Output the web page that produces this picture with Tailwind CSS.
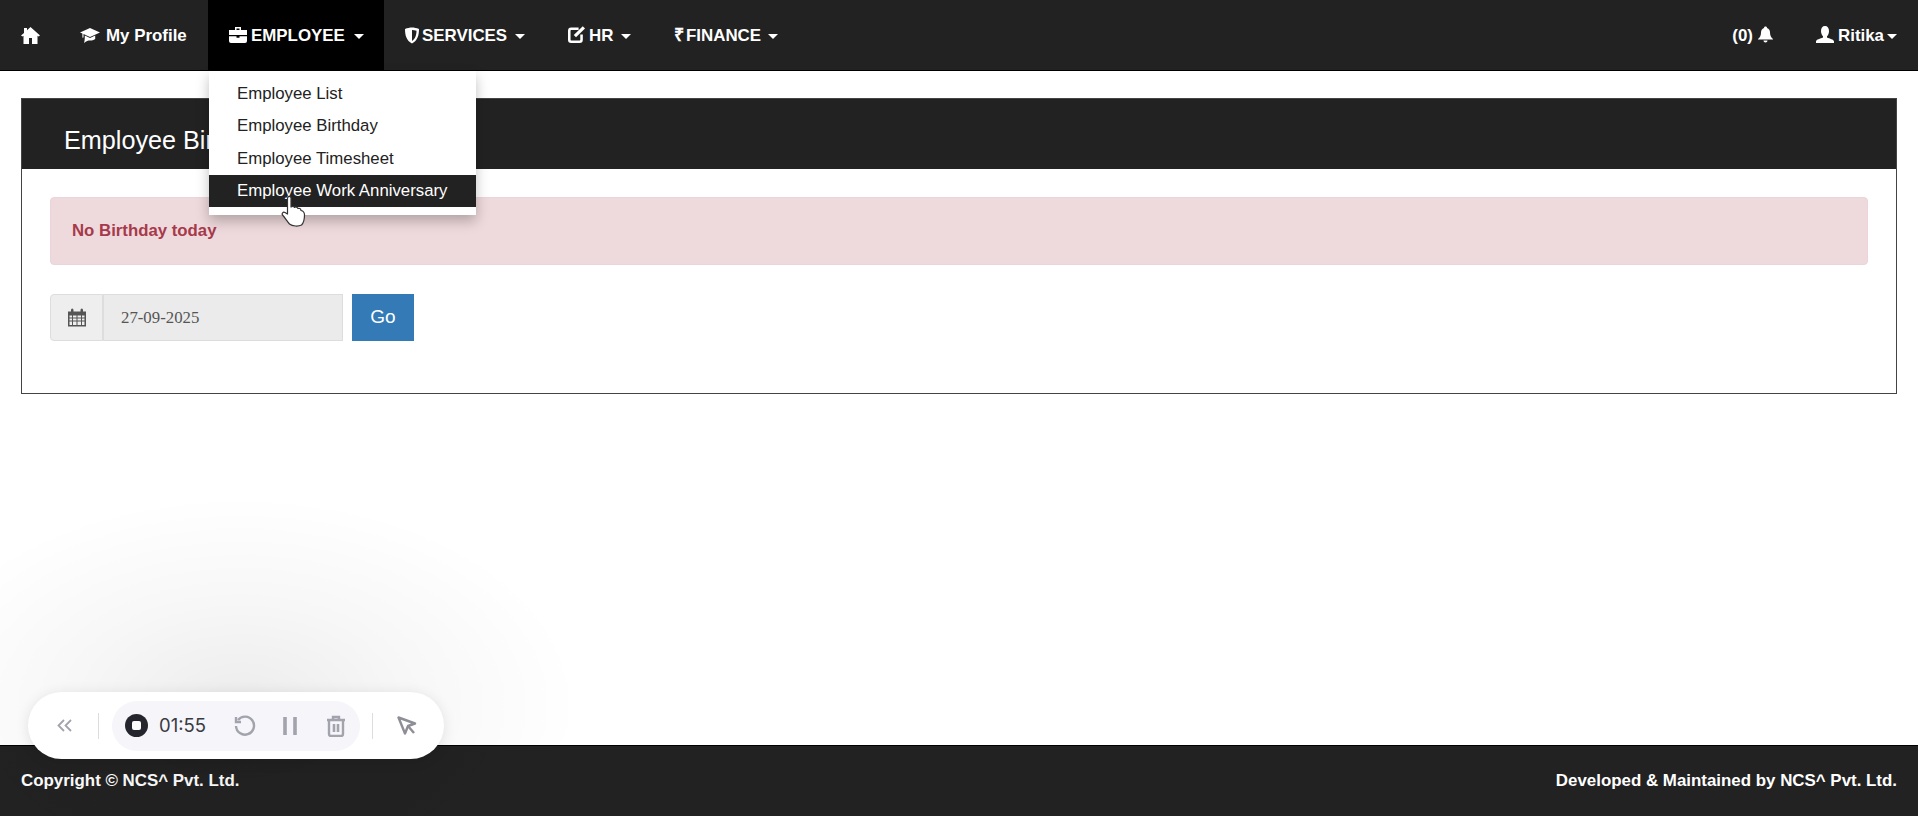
<!DOCTYPE html>
<html lang="en">
  <head>
    <meta charset="UTF-8" />
    <meta name="viewport" content="width=device-width, initial-scale=1.0" />
    <title>Employee Birthday</title>
    <script src="https://cdn.jsdelivr.net/npm/@tailwindcss/browser@4"></script>
  </head>
  <body class="bg-white font-['Liberation_Sans',Arial,sans-serif] overflow-hidden">
    <div class="relative flex flex-col h-screen w-[1918px]">
      <!-- top nav -->
      <nav class="flex items-stretch justify-between h-[71px] bg-[#222] text-white text-[16.900px] font-bold border-b border-black shrink-0">
        <div class="flex items-stretch">
          <a class="flex items-center w-[59px] pl-[21px]">
            <svg class="w-[19px] h-[17px]" viewBox="0 0 19 17" fill="currentColor"><path d="M9.500 0 19 8.600 17.600 9.600 16.500 8.700V17H11V11H8V17H2.500V8.700L1.400 9.600 0 8.600 3 5.900V1H6V3.200Z"/></svg>
          </a>
          <a class="flex items-center w-[149px] pl-[21px] gap-[6px] pt-[2px]">
            <svg class="w-[20px] h-[15px] -mt-[2px]" viewBox="0 0 20 15" fill="currentColor"><path d="M10 0 20 4.400 10 9 3.500 6V9.400L2.400 9.800V5.500L0 4.400ZM4.800 7.400 10 10 15.200 7.400V11C13.500 12.200 12 12.600 10 12.600 8 12.600 6.500 13 4 15 4.600 13 4.800 11 4.800 7.400Z"/></svg>
            <span>My Profile</span>
          </a>
          <a class="flex items-center w-[176px] pl-[21px] gap-[4px] bg-black pt-[2px]">
            <svg class="w-[18px] h-[16px] -mt-[3px]" viewBox="0 0 18 16" fill="currentColor"><path d="M6 0H12V3H18V8H0V3H6ZM7.500 1.400V3H10.500V1.400ZM0 9.200H7.500V10.700H10.500V9.200H18V14Q18 16 16 16H2Q0 16 0 14Z"/></svg>
            <span>EMPLOYEE</span>
            <span class="ml-[5px] w-0 h-0 border-x-[5px] border-x-transparent border-t-[5px] border-t-white"></span>
          </a>
          <a class="flex items-center w-[163px] pl-[21px] gap-[3px] pt-[2px]">
            <svg class="w-[14px] h-[17px] -mt-[2px]" viewBox="0 0 14 16" fill="currentColor"><path d="M0 1.500C2.500.5 4.700 0 7 0S11.500.5 14 1.500C14 8 12.500 13 7 16 1.500 13 0 8 0 1.500ZM7 2.500V13.400C10.500 11 11.500 7 11.500 3.200 10 2.800 8.500 2.500 7 2.500Z"/></svg>
            <span>SERVICES</span>
            <span class="ml-[5px] w-0 h-0 border-x-[5px] border-x-transparent border-t-[5px] border-t-white"></span>
          </a>
          <a class="flex items-center w-[107px] pl-[21px] gap-[3px] pt-[2px]">
            <svg class="w-[18px] h-[17px] -mt-[3px]" viewBox="0 0 17 16" fill="none" stroke="currentColor"><path stroke-width="2.400" d="M10 2.500H3Q1.200 2.500 1.200 4.500V13Q1.200 14.800 3 14.800H11Q12.800 14.800 12.800 13V8"/><path stroke-width="3" d="M6.500 9.500 15 1.200"/></svg>
            <span>HR</span>
            <span class="ml-[5px] w-0 h-0 border-x-[5px] border-x-transparent border-t-[5px] border-t-white"></span>
          </a>
          <a class="flex items-center pl-[20px] gap-[2px] pt-[2px]">
            <span class="text-[18px] -mt-[2px]">₹</span>
            <span>FINANCE</span>
            <span class="ml-[5px] w-0 h-0 border-x-[5px] border-x-transparent border-t-[5px] border-t-white"></span>
          </a>
        </div>
        <div class="flex items-center pr-[21px] pt-[2px]">
          <span>(0)</span>
          <svg class="ml-[5px] -mt-[3px] w-[15px] h-[17px]" viewBox="0 0 15 16" fill="currentColor"><path d="M7.500 0C8.500 0 9 .6 9 1.400 11 2 12 3.700 12 6 12 9 13 11 15 12.500V13H0V12.500C2 11 3 9 3 6 3 3.700 4 2 6 1.400 6 .6 6.500 0 7.500 0ZM5.500 14H9.500C9.500 15.200 8.700 16 7.500 16S5.500 15.200 5.500 14Z"/></svg>
          <svg class="ml-[43px] -mt-[3px] w-[18px] h-[17px]" viewBox="0 0 18 17" fill="currentColor"><path d="M9 0C11.700 0 13 2 13 5 13 7.500 12 9.500 11 10.300V11.500C13.500 12.500 18 13.500 18 15.500V17H0V15.500C0 13.500 4.500 12.500 7 11.500V10.300C6 9.500 5 7.500 5 5 5 2 6.300 0 9 0Z"/></svg>
          <span class="ml-[4px]">Ritika</span>
          <span class="ml-[3px] w-0 h-0 border-x-[5px] border-x-transparent border-t-[5px] border-t-white"></span>
        </div>
      </nav>

      <!-- content -->
      <main class="flex-1 px-[21px] pt-[27px]">
        <section class="border border-[#444] w-[1876px]">
          <h1 class="flex items-center h-[70px] pl-[42px] pt-[14px] bg-[#222] text-white text-[25.200px] font-normal">Employee Birthday</h1>
          <div class="px-[28px] pt-[28px] pb-[52px]">
            <div class="flex items-center h-[68px] pl-[21px] rounded bg-[#eed9dc] border border-[#ebd5da] text-[#a63a4b] text-[16.800px] font-bold">No Birthday today</div>
            <div class="flex items-stretch h-[47px] mt-[29px]">
              <span class="flex items-center justify-center w-[53px] bg-[#eee] border border-[#ddd] rounded-l">
                <svg class="w-[18px] h-[19px]" viewBox="0 0 18 18" fill="#555"><path d="M0 3H3V1.500Q3 0 4.200 0T5.500 1.500V3H12.500V1.500Q12.500 0 13.800 0T15 1.500V3H18V18H0ZM1.500 7V9H4V7ZM5 7V9H8.500V7ZM9.500 7V9H13V7ZM14 7V9H16.500V7ZM1.500 10V12H4V10ZM5 10V12H8.500V10ZM9.500 10V12H13V10ZM14 10V12H16.500V10ZM1.500 13V16.500H4V13ZM5 13V16.500H8.500V13ZM9.500 13V16.500H13V13ZM14 13V16.500H16.500V13Z"/></svg>
              </span>
              <input value="27-09-2025" readonly class="w-[240px] pl-[17px] bg-[#ebebeb] border border-[#ddd] text-[#555] text-[16.800px] font-['Liberation_Serif',serif]" />
              <button class="w-[62px] ml-[9px] bg-[#337ab7] text-white text-[19px]">Go</button>
            </div>
          </div>
        </section>
      </main>

      <footer class="flex items-center justify-between h-[71px] px-[21px] bg-[#222] text-white text-[16.900px] font-bold border-t border-black shrink-0">
        <span>Copyright © NCS^ Pvt. Ltd.</span>
        <span>Developed &amp; Maintained by NCS^ Pvt. Ltd.</span>
      </footer>

      <!-- employee dropdown -->
      <ul class="absolute left-[209px] top-[71px] w-[267px] h-[144px] pt-[6px] bg-white shadow-[0_6px_12px_rgba(0,0,0,0.25)] text-[16.800px] text-[#222]">
        <li class="flex items-center h-[32.500px] pl-[28px]">Employee List</li>
        <li class="flex items-center h-[32.500px] pl-[28px]">Employee Birthday</li>
        <li class="flex items-center h-[32.500px] pl-[28px]">Employee Timesheet</li>
        <li class="flex items-center h-[32.500px] pl-[28px] bg-[#222] text-white">Employee Work Anniversary</li>
      </ul>

      <!-- mouse pointer -->
      <svg class="absolute left-[281px] top-[195px] w-[25px] h-[32px]" viewBox="0 0 24 32" fill="#fff" stroke="#333" stroke-width="1.200" stroke-linejoin="round">
        <path d="M6.500 2C7.800 1 9.500 1.500 9.500 3V12C10.500 11 12.500 11 13 12.500 14 11.500 16 12 16.300 13.500 17.500 13 19.500 13.500 19.500 15.500 22 16 23 18 23 20 23 25 22 28 20 30 17 31.500 11 31.500 8 29 5.500 26 3 22 1 20 0 18.500 1.500 16.500 3.500 17.500L6 19V3Z"/>
      </svg>

      <!-- screen recorder widget -->
      <div class="absolute left-0 top-[500px] w-[620px] h-[316px] pointer-events-none bg-[radial-gradient(ellipse_340px_210px_at_240px_205px,rgba(0,0,0,0.075),rgba(0,0,0,0.03)_50%,transparent_100%)]"></div>
      <div class="absolute left-[28px] top-[692px] flex items-center w-[416px] h-[67px] rounded-full bg-white shadow-[0_2px_14px_rgba(0,0,0,0.10)] font-['Inter',sans-serif]">
        <svg class="ml-[29px] w-[15px] h-[13px]" viewBox="0 0 15 13" fill="none" stroke="#a3a3ad" stroke-width="1.800"><path d="M7 1 1.500 6.500 7 12M14 1 8.500 6.500 14 12"/></svg>
        <span class="ml-[26px] w-px h-[26px] bg-[#ddd]"></span>
        <div class="flex items-center ml-[13px] w-[248px] h-[50px] rounded-full bg-[#f5f5fa]">
          <span class="flex items-center justify-center ml-[13px] w-[23px] h-[23px] rounded-full bg-[#25252d]"><span class="w-[9px] h-[9px] rounded-[2px] bg-white"></span></span>
          <span class="ml-[11px] text-[18.500px] text-[#3a3a42]">01:55</span>
          <svg class="ml-[28px] w-[22px] h-[22px]" viewBox="0 0 22 22" fill="none" stroke="#a3a3ad" stroke-width="2.400"><path d="M4 5A9 9 0 1 1 2 11"/><path d="M2 2V7H7"/></svg>
          <svg class="ml-[27px] w-[14px] h-[20px]" viewBox="0 0 14 20" fill="none" stroke="#a3a3ad" stroke-width="3.600"><path d="M2 1V19M12 1V19"/></svg>
          <svg class="ml-[29px] w-[20px] h-[22px]" viewBox="0 0 20 22" fill="none" stroke="#a3a3ad" stroke-width="2.400"><path d="M1 5H19M7 5V2H13V5M3 5V19Q3 21 5 21H15Q17 21 17 19V5"/><path stroke-width="2.600" d="M8 9V17M12 9V17"/></svg>
        </div>
        <span class="ml-[12px] w-px h-[26px] bg-[#ddd]"></span>
        <svg class="ml-[24px] w-[20px] h-[20px]" viewBox="0 0 20 20" fill="none" stroke="#8e8e96" stroke-width="2.400" stroke-linejoin="round"><path d="M1.500 1.500 18 7.500 11 10 8 17.500Z"/><path d="M11 10 17 17"/></svg>
      </div>
    </div>
  </body>
</html>
